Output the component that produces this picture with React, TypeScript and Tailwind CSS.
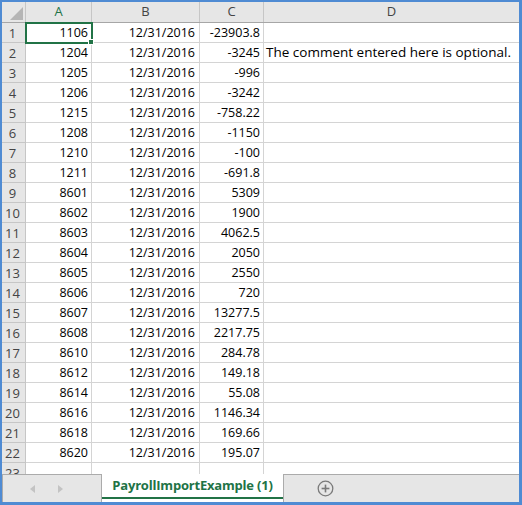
import { Fragment } from 'react';

const rows: [number, string, string, string][] = [
  [1, '1106', '-23903.8', ''],
  [2, '1204', '-3245', 'The comment entered here is optional.'],
  [3, '1205', '-996', ''],
  [4, '1206', '-3242', ''],
  [5, '1215', '-758.22', ''],
  [6, '1208', '-1150', ''],
  [7, '1210', '-100', ''],
  [8, '1211', '-691.8', ''],
  [9, '8601', '5309', ''],
  [10, '8602', '1900', ''],
  [11, '8603', '4062.5', ''],
  [12, '8604', '2050', ''],
  [13, '8605', '2550', ''],
  [14, '8606', '720', ''],
  [15, '8607', '13277.5', ''],
  [16, '8608', '2217.75', ''],
  [17, '8610', '284.78', ''],
  [18, '8612', '149.18', ''],
  [19, '8614', '55.08', ''],
  [20, '8616', '1146.34', ''],
  [21, '8618', '169.66', ''],
  [22, '8620', '195.07', ''],
];

const font = { fontFamily: '"Open Sans", "Liberation Sans", sans-serif' };

function HeaderRow() {
  return (
    <div className="flex h-[21px] shrink-0 bg-[#e6e6e6] border-b border-[#a6a6a6] text-[13px] text-[#444]">
      <div className="relative w-[24px] shrink-0 border-r border-[#c6c6c6]">
        {/* select-all triangle */}
        <svg className="absolute right-[2px] bottom-[2px]" width="13" height="13" viewBox="0 0 13 13">
          <polygon points="13,0 13,13 0,13" fill="#b5b5b5" />
        </svg>
      </div>
      <div className="w-[66px] shrink-0 border-r border-[#c6c6c6] flex items-center justify-center text-[#217346]">A</div>
      <div className="w-[108px] shrink-0 border-r border-[#c6c6c6] flex items-center justify-center">B</div>
      <div className="w-[64px] shrink-0 border-r border-[#c6c6c6] flex items-center justify-center">C</div>
      <div className="flex-1 flex items-center justify-center">D</div>
    </div>
  );
}

function Row({ n, a, c, d }: { n: number; a: string; c: string; d: string }) {
  return (
    <div className="flex h-[20px] shrink-0 text-[12.5px] leading-none">
      <div className="w-[24px] shrink-0 bg-[#e6e6e6] border-r border-b border-[#c6c6c6] flex items-center justify-center pr-[2px] pt-[1px] text-[13px] text-[#444]">
        {n}
      </div>
      <div className="relative w-[66px] shrink-0 border-r border-b border-[#d4d4d4] flex items-center justify-end pr-[3px] pt-[1px] text-black">
        {a}
        {n === 1 && (
          <>
            <div className="absolute z-10 -left-[1px] -top-[1px] w-[68px] h-[22px] border-2 border-[#217346]" />
            <div className="absolute z-10 -right-[3px] -bottom-[3px] w-[6px] h-[6px] bg-[#217346] border border-white" />
          </>
        )}
      </div>
      <div className="w-[108px] shrink-0 border-r border-b border-[#d4d4d4] flex items-center justify-end pr-[4px] pt-[1px] text-black">
        12/31/2016
      </div>
      <div className="w-[64px] shrink-0 border-r border-b border-[#d4d4d4] flex items-center justify-end pr-[3px] pt-[1px] text-black">
        {c}
      </div>
      <div className="flex-1 border-b border-[#d4d4d4] flex items-center pl-[2px] pt-[1px] text-[13.5px] text-black whitespace-nowrap">
        {d}
      </div>
    </div>
  );
}

function EmptyRow({ n }: { n: number }) {
  return (
    <div className="flex h-[20px] shrink-0 text-[13px] leading-none">
      <div className="w-[24px] shrink-0 bg-[#e6e6e6] border-r border-b border-[#c6c6c6] flex items-center justify-center pr-[2px] pt-[1px] text-[#444]">
        {n}
      </div>
      <div className="w-[66px] shrink-0 border-r border-b border-[#d4d4d4]" />
      <div className="w-[108px] shrink-0 border-r border-b border-[#d4d4d4]" />
      <div className="w-[64px] shrink-0 border-r border-b border-[#d4d4d4]" />
      <div className="flex-1 border-b border-[#d4d4d4]" />
    </div>
  );
}

export default function App() {
  return (
    <div
      className="w-[522px] h-[505px] bg-white border-[#4f8bd3] border-l-2 border-t-2 border-r-[3px] border-b-[3px] flex flex-col overflow-hidden"
      style={font}
    >
      {/* Grid */}
      <div className="h-[472px] flex flex-col overflow-hidden">
        <HeaderRow />
        {rows.map(([n, a, c, d]) => (
          <Fragment key={n}>
            <Row n={n} a={a} c={c} d={d} />
          </Fragment>
        ))}
        <EmptyRow n={23} />
      </div>

      {/* Sheet tabs */}
      <div className="flex h-[28px] shrink-0">
        <div className="w-[100px] shrink-0 bg-[#e6e6e6] border-t border-r border-l border-[#ababab] flex items-center pl-[27px] gap-[23px]">
          <svg width="5" height="8" viewBox="0 0 5 8">
            <polygon points="5,0 5,8 0,4" fill="#c3c3c3" />
          </svg>
          <svg width="5" height="8" viewBox="0 0 5 8">
            <polygon points="0,0 0,8 5,4" fill="#c3c3c3" />
          </svg>
        </div>
        <div className="w-[181px] shrink-0 bg-white flex flex-col">
          <div className="flex-1 flex items-center justify-center text-[13px] font-bold tracking-[-0.2px] text-[#217346] pt-[1px]">
            PayrollImportExample (1)
          </div>
          <div className="h-[2px] bg-[#217346]" />
          <div className="h-[3px]" />
        </div>
        <div className="flex-1 bg-[#e6e6e6] border-t border-l border-[#ababab] flex items-center pl-[33px]">
          <svg width="17" height="17" viewBox="0 0 17 17">
            <circle cx="8.5" cy="8.5" r="7.3" fill="none" stroke="#7a7a7a" strokeWidth="1.3" />
            <line x1="8.5" y1="4.6" x2="8.5" y2="12.4" stroke="#7a7a7a" strokeWidth="1.6" />
            <line x1="4.6" y1="8.5" x2="12.4" y2="8.5" stroke="#7a7a7a" strokeWidth="1.6" />
          </svg>
        </div>
      </div>
    </div>
  );
}
